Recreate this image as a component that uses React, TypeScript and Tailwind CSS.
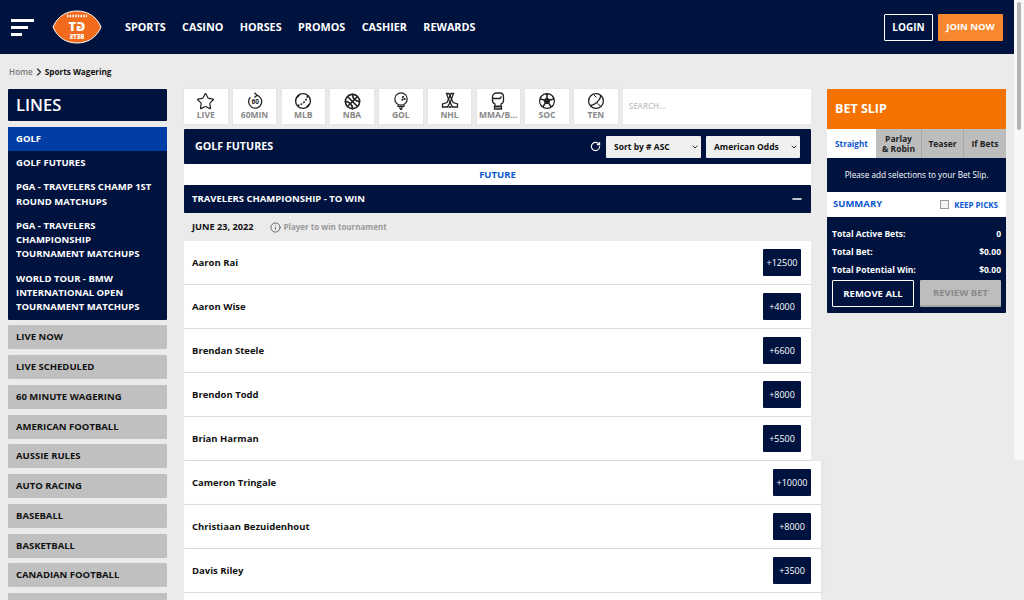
import { ChevronDown, ChevronRight, Info, Minus, RotateCw, Star } from "lucide-react"
import { TbBallBasketball } from "react-icons/tb"
import type { ReactNode } from "react"

const font = { fontFamily: '"Open Sans", sans-serif' }

function Logo() {
  return (
    <svg width="50" height="34" viewBox="0 0 50 34">
      <path d="M1 17C6 5 16 1 25 1s19 4 24 16c-5 12-15 16-24 16S6 29 1 17Z" fill="#f26b1d" stroke="#fff" strokeWidth="1" />
      <path d="M15 6h20" stroke="#fff" strokeWidth="2.4" strokeDasharray="1.5 1.2" />
      <g transform="translate(50 0) scale(-1 1)" fill="#fff" textAnchor="middle" fontFamily="Open Sans" fontWeight="800">
        <text x="25" y="20.500" fontSize="12.500">GT</text>
        <text x="25" y="28.500" fontSize="6">BETS</text>
      </g>
    </svg>
  )
}

function SixtyIcon() {
  return (
    <svg width="18" height="18" viewBox="0 0 18 18" fill="none" stroke="#222" strokeWidth="1.3">
      <path d="M10 3.2a6.5 6.5 0 1 1-5.6 2" />
      <path d="M8.5 0.8 11 3.2 8.5 5.4" />
      <text x="9.2" y="12" fontSize="6.5" fontWeight="700" fill="#222" stroke="none" textAnchor="middle" fontFamily="Open Sans">60</text>
    </svg>
  )
}

function BaseballIcon() {
  return (
    <svg width="18" height="18" viewBox="0 0 18 18" fill="none" stroke="#222" strokeWidth="1.4">
      <circle cx="9" cy="9" r="7.4" />
      <path d="M3.500 13.500C8 13 13 8.500 13.500 3.500" strokeWidth="1.6" strokeDasharray="2 1.2" />
      <path d="M2.500 6 5.500 3M12.500 15l3-3" strokeWidth="1.2" />
    </svg>
  )
}

function GolfIcon() {
  return (
    <svg width="18" height="18" viewBox="0 0 18 18" fill="none" stroke="#222" strokeWidth="1.2">
      <circle cx="9" cy="7" r="6.2" />
      <path d="M6 13v1.5h6V13M7.5 14.5 8.5 17.5h1l1-3" />
      <circle cx="11" cy="5" r="0.5" fill="#222" />
      <circle cx="12.6" cy="7" r="0.5" fill="#222" />
      <circle cx="10.4" cy="7.6" r="0.5" fill="#222" />
    </svg>
  )
}

function HockeyIcon() {
  return (
    <svg width="18" height="18" viewBox="0 0 18 18" fill="none" stroke="#222" strokeWidth="1.3">
      <path d="M5.500 1.500h2.500L12 10.500l4.500 1.500v3H11.500L8 8.500Z" />
      <path d="M12.500 1.500H10L6 10.500l-4.500 1.500v3H6.500L10 8.500Z" />
      <path d="M7.500 15h3" strokeWidth="1.6" />
    </svg>
  )
}

function GloveIcon() {
  return (
    <svg width="18" height="18" viewBox="0 0 18 18" fill="none" stroke="#222" strokeWidth="1.3">
      <path d="M3.500 5C3.500 2.500 5.500 1 8 1h3c2.500 0 3.500 1.800 3.500 4v3.500c0 1.800-1 3-2.500 3.500v2.500H6V12c-1.500-.5-2.500-1.800-2.500-3.500Z" />
      <path d="M3.500 6.500H11l1.500-2" />
      <path d="M5.500 14.500h7V17h-7Z" />
    </svg>
  )
}

function SoccerIcon() {
  return (
    <svg width="18" height="18" viewBox="0 0 18 18" fill="#222" stroke="#222" strokeWidth="1.2">
      <circle cx="9" cy="9" r="7.4" fill="none" />
      <path d="M9 6 11.800 8 10.800 11.300H7.200L6.200 8Z" />
      <path d="M9 2v4M11.800 8 15.800 7M10.800 11.300 13.300 15M7.200 11.300 4.700 15M6.200 8 2.200 7" fill="none" strokeWidth="1.500" />
      <path d="M6.800 2 9 3.500 11.200 2ZM14 4.300 15.800 7.500 16.200 4.800ZM4 4.300 2.200 7.500 1.800 4.800ZM2.500 12.500 4.700 15 2.900 14.500ZM15.500 12.500 13.300 15 15.100 14.500Z" stroke="none" />
    </svg>
  )
}

function TennisIcon() {
  return (
    <svg width="18" height="18" viewBox="0 0 18 18" fill="none" stroke="#222" strokeWidth="1.3">
      <circle cx="9" cy="9" r="7.4" />
      <path d="M3.500 13.500C8 13 13 8.500 14 3.500" />
      <path d="M7 3 9.500 5.500M10.500 11.500 13.500 14" strokeWidth="1" />
    </svg>
  )
}

const sportTabs: { label: string; icon: ReactNode }[] = [
  { label: "LIVE", icon: <Star size={19} strokeWidth={1.5} color="#222" /> },
  { label: "60MIN", icon: <SixtyIcon /> },
  { label: "MLB", icon: <BaseballIcon /> },
  { label: "NBA", icon: <TbBallBasketball size={19} color="#222" /> },
  { label: "GOL", icon: <GolfIcon /> },
  { label: "NHL", icon: <HockeyIcon /> },
  { label: "MMA/B...", icon: <GloveIcon /> },
  { label: "SOC", icon: <SoccerIcon /> },
  { label: "TEN", icon: <TennisIcon /> },
]

const leagues = [
  "GOLF FUTURES",
  "PGA - TRAVELERS CHAMP 1ST ROUND MATCHUPS",
  "PGA - TRAVELERS CHAMPIONSHIP TOURNAMENT MATCHUPS",
  "WORLD TOUR - BMW INTERNATIONAL OPEN TOURNAMENT MATCHUPS",
]

const sports = [
  "LIVE NOW",
  "LIVE SCHEDULED",
  "60 MINUTE WAGERING",
  "AMERICAN FOOTBALL",
  "AUSSIE RULES",
  "AUTO RACING",
  "BASEBALL",
  "BASKETBALL",
  "CANADIAN FOOTBALL",
]

const players = [
  ["Aaron Rai", "+12500"],
  ["Aaron Wise", "+4000"],
  ["Brendan Steele", "+6600"],
  ["Brendon Todd", "+8000"],
  ["Brian Harman", "+5500"],
  ["Cameron Tringale", "+10000"],
  ["Christiaan Bezuidenhout", "+8000"],
  ["Davis Riley", "+3500"],
]

function Select({ label, width }: { label: string; width: string }) {
  return (
    <div className={`flex h-[22px] items-center justify-between rounded-[1px] bg-[#f0f0f0] pl-2 pr-[2px] text-[8.5px] font-bold text-[#111] ${width}`}>
      <span className="pt-[1px]">{label}</span>
      <ChevronDown size={8} strokeWidth={2.6} />
    </div>
  )
}

export default function App() {
  return (
    <div className="relative h-[600px] w-[1024px] overflow-hidden bg-[#ebebeb]" style={font}>
      <header className="flex h-[54px] items-center bg-[#00133f] pr-[21px]">
        <div className="ml-[11px] flex w-[23px] flex-col gap-[4px]">
          <span className="h-[3px] w-[23px] bg-white" />
          <span className="h-[3px] w-[17px] bg-white" />
          <span className="h-[3px] w-[11px] bg-white" />
        </div>
        <div className="ml-[18px]">
          <Logo />
        </div>
        <nav className="ml-[23px] flex gap-[16.4px] pt-[1px] text-[10.8px] font-bold text-white">
          <span>SPORTS</span>
          <span>CASINO</span>
          <span>HORSES</span>
          <span>PROMOS</span>
          <span>CASHIER</span>
          <span>REWARDS</span>
        </nav>
        <div className="ml-auto flex gap-[5px] font-bold text-white">
          <div className="flex h-[27px] w-[49px] items-center justify-center rounded-[1px] border border-white pt-[1px] text-[10px]">LOGIN</div>
          <div className="flex h-[27px] w-[65px] items-center justify-center rounded-[1px] bg-[#f7882f] pt-[1px] text-[9.5px]">JOIN NOW</div>
        </div>
      </header>

      <div className="flex h-[35px] items-center pl-[9px] pt-[1px] text-[8.2px] font-semibold">
        <span className="text-[#777]">Home</span>
        <ChevronRight size={12} strokeWidth={2.2} className="text-[#222]" />
        <span className="font-bold text-[#111]">Sports Wagering</span>
      </div>

      <div className="flex items-start pl-[8px]">
        <aside className="w-[159px]">
          <div className="flex h-[32px] items-center rounded-[1px] bg-[#00133f] pl-[8px] text-[16.5px] font-semibold text-white">LINES</div>
          <div className="mt-[6px] rounded-[1px] bg-[#00133f] pb-[6px] text-[9.5px] font-bold leading-[14.2px] text-white">
            <div className="flex h-[24px] items-center bg-[#003da5] pl-[8px]">GOLF</div>
            <div className="flex flex-col gap-[10.2px] pl-[8px] pr-[6px] pt-[5px]">
              {leagues.map((item) => (
                <div key={item}>{item}</div>
              ))}
            </div>
          </div>
          <div className="mt-[5px] flex flex-col gap-[5.75px]">
            {sports.map((item) => (
              <div key={item} className="flex h-[24px] shrink-0 items-center rounded-[1px] bg-[#c0c0c0] pl-[8px] text-[9.5px] font-bold text-[#111]">
                {item}
              </div>
            ))}
            <div className="h-[24px] shrink-0 rounded-[1px] bg-[#c0c0c0]" />
          </div>
        </aside>

        <main className="ml-[17px] w-[627px]">
          <div className="flex h-[35px] gap-[5.25px]">
            {sportTabs.map((tab) => (
              <div key={tab.label} className="flex w-[43.5px] shrink-0 flex-col items-center bg-white pt-[3px] shadow-[0_0_2px_rgba(0,0,0,0.08)]">
                <div className="flex h-[18px] items-center">{tab.icon}</div>
                <div className="whitespace-nowrap text-[8.5px] font-bold leading-[10px] text-[#888]">{tab.label}</div>
              </div>
            ))}
            <div className="flex flex-1 items-center bg-white pb-[2px] pl-[6px] text-[8px] font-semibold text-[#c4c4c4]">SEARCH...</div>
          </div>

          <div className="mt-[5px] flex h-[35px] items-center rounded-[1px] bg-[#00133f] pl-[11px] pr-[11px]">
            <span className="text-[10.7px] font-bold text-white">GOLF FUTURES</span>
            <RotateCw size={11} strokeWidth={2.4} className="ml-auto mr-[5px] text-white" />
            <Select label="Sort by # ASC" width="w-[95px]" />
            <Select label="American Odds" width="ml-[5px] w-[94px]" />
          </div>
          <div className="flex h-[21px] items-center justify-center bg-white pt-[1px] text-[9.5px] font-bold text-[#0b57d0]">FUTURE</div>
          <div className="flex h-[28px] items-center justify-between rounded-[1px] bg-[#00133f] pl-[8px] pr-[7px] text-[9.5px] font-bold text-white">
            TRAVELERS CHAMPIONSHIP - TO WIN
            <Minus size={14} strokeWidth={2.6} />
          </div>
          <div className="flex h-[28px] items-center pl-[8px]">
            <span className="text-[9.2px] font-bold text-[#111]">JUNE 23, 2022</span>
            <Info size={11} strokeWidth={1.7} className="ml-[16px] text-[#444]" />
            <span className="ml-[3px] text-[8px] font-bold text-[#999]">Player to win tournament</span>
          </div>
          {players.map(([name, odds], i) => (
            <div
              key={name}
              className={`flex h-[44px] items-center justify-between border-b border-[#ddd] bg-white pl-[8px] pr-[10px] text-[9.5px] font-bold text-[#111] ${i > 4 ? "w-[637px] shadow-[2px_0_3px_rgba(0,0,0,0.03)]" : "w-[627px]"}`}
            >
              <span className="pt-[1px]">{name}</span>
              <div className="flex h-[27px] w-[38px] items-center justify-center rounded-[1px] bg-[#00133f] text-[9px] font-normal text-white">{odds}</div>
            </div>
          ))}
          <div className="h-[44px] w-[637px] bg-white" />
        </main>

        <aside className="ml-[16px] w-[179px]">
          <div className="flex h-[40px] items-center bg-[#f57200] pl-[8px] pt-[1px] text-[12.5px] font-bold text-white">BET SLIP</div>
          <div className="flex h-[29px] text-center text-[8.5px] font-bold leading-[9.5px] text-[#222]">
            <div className="flex w-[49px] items-center justify-center bg-white text-[8.2px] text-[#0b57d0]">Straight</div>
            <div className="flex w-[45px] items-center justify-center bg-[#bdbdbd]">
              Parlay
              <br />& Robin
            </div>
            <div className="flex w-[42px] items-center justify-center border-l border-[#a8a8a8] bg-[#bdbdbd]">Teaser</div>
            <div className="flex w-[43px] items-center justify-center border-l border-[#a8a8a8] bg-[#bdbdbd]">If Bets</div>
          </div>
          <div className="flex h-[34px] items-center justify-center bg-[#00133f] pt-[1px] text-[8.2px] text-white">Please add selections to your Bet Slip.</div>
          <div className="flex h-[25px] items-center bg-white pl-[6px] pr-[8px] font-bold text-[#0b57d0]">
            <span className="text-[9.5px]">SUMMARY</span>
            <span className="ml-auto h-[9px] w-[9px] border border-[#999] bg-[#f4f4f4]" />
            <span className="ml-[5px] text-[8px]">KEEP PICKS</span>
          </div>
          <div className="rounded-b-[1px] bg-[#00133f] px-[5px] pb-[6px] pt-[10px] text-[8.5px] font-bold leading-[12px] text-white">
            <div className="flex flex-col gap-[6px] pt-[1px]">
              <div className="flex justify-between">
                <span>Total Active Bets:</span>
                <span>0</span>
              </div>
              <div className="flex justify-between">
                <span>Total Bet:</span>
                <span>$0.00</span>
              </div>
              <div className="flex justify-between">
                <span>Total Potential Win:</span>
                <span>$0.00</span>
              </div>
            </div>
            <div className="mt-[4px] flex justify-between text-[9.5px]">
              <div className="flex h-[27px] w-[82px] items-center justify-center rounded-[1px] border border-white">REMOVE ALL</div>
              <div className="flex h-[27px] w-[81px] items-center justify-center rounded-[1px] border-b-2 border-[#a8a8a8] bg-[#bdbdbd] text-[#8a8a8a]">REVIEW BET</div>
            </div>
          </div>
        </aside>
      </div>

      {/* page scrollbar */}
      <div className="absolute right-0 top-0 h-[460px] w-[10px] rounded-b-[2px] bg-[#f8f8f8]">
        <div className="ml-[3px] mt-[2px] h-[128px] w-[4px] rounded-full bg-[#b5b5b5]" />
      </div>
    </div>
  )
}
